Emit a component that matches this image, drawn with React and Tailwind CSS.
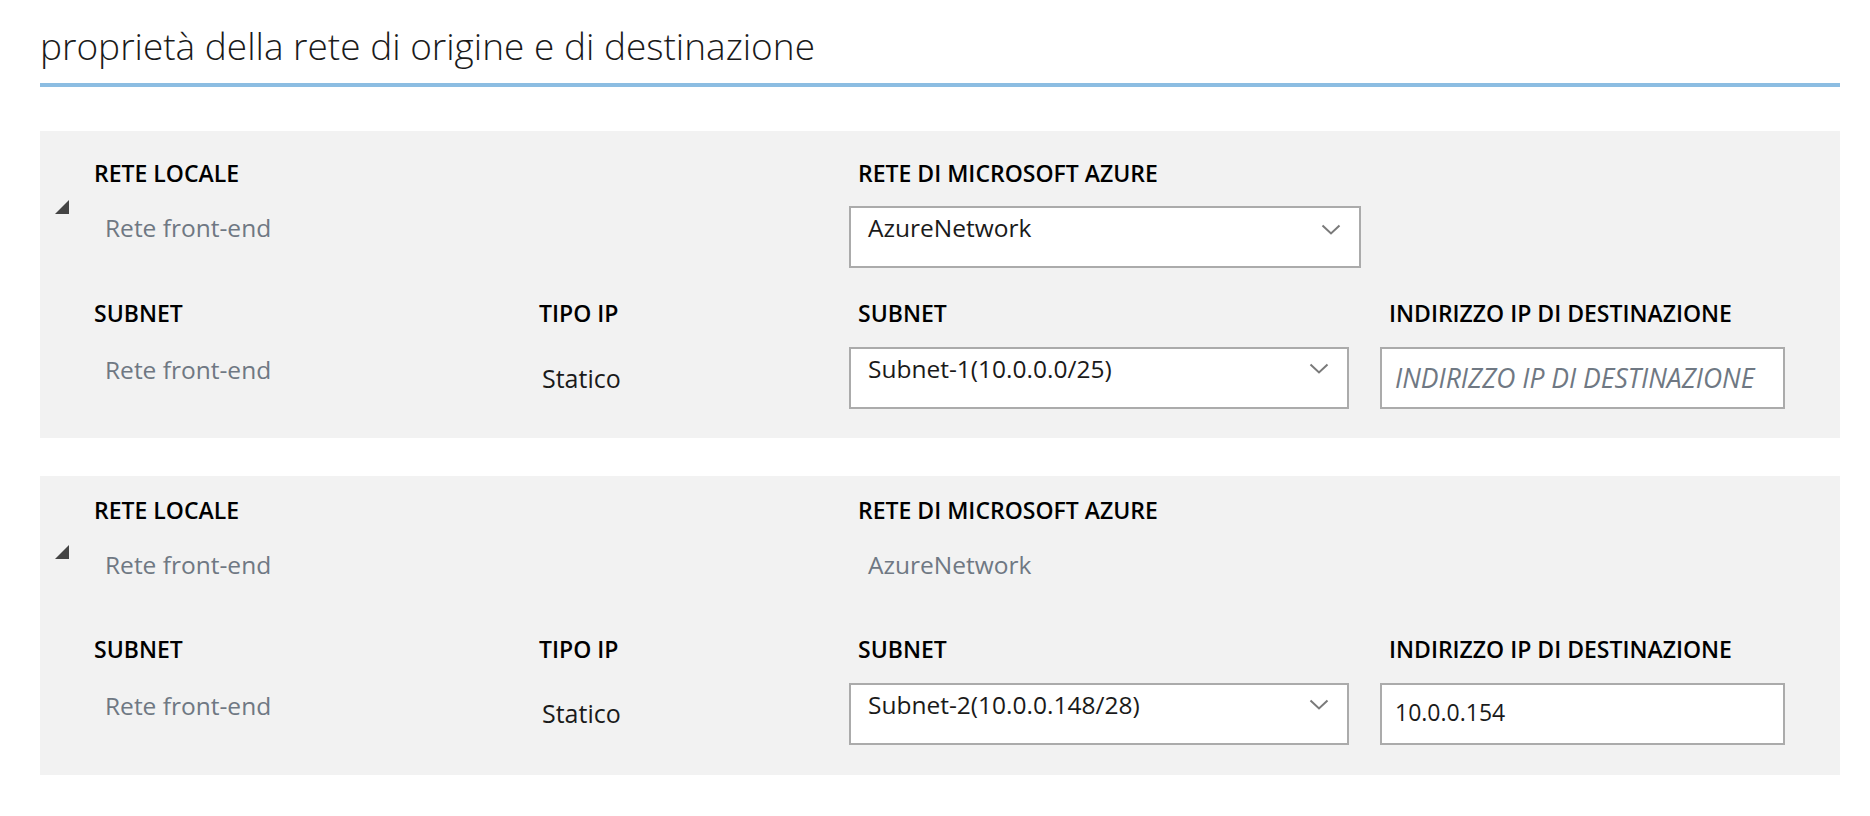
import React from "react";

const Tri = () => (
  <svg width="14" height="14" viewBox="0 0 14 14" className="block">
    <polygon points="14,0 14,14 0,14" fill="#444444" />
  </svg>
);

const Chevron = ({ top }) => (
  <svg
    width="20"
    height="11"
    viewBox="0 0 20 11"
    className={"absolute right-[18px] " + top}
  >
    <polyline points="1.5,1.5 10,9.5 18.5,1.5" fill="none" stroke="#7a7a7a" strokeWidth="2" />
  </svg>
);

const Label = ({ children, className = "" }) => (
  <div className={"text-[23px] font-semibold leading-[32px] text-black whitespace-nowrap " + className}>
    {children}
  </div>
);

const Gray = ({ children, className = "" }) => (
  <div className={"text-[24.5px] leading-[32px] text-[#6f7883] whitespace-nowrap " + className}>
    {children}
  </div>
);

const Select = ({ children, width, chevTop }) => (
  <div
    className={
      "relative h-[62px] border-2 border-[#ababab] bg-white pl-[17px] pt-[4px] text-[24.5px] leading-[32px] text-[#1a1a1a] whitespace-nowrap " +
      width
    }
  >
    {children}
    <Chevron top={chevTop} />
  </div>
);

const TextBox = ({ children, placeholder }) => (
  <div className="flex h-[62px] w-[405px] items-center border-2 border-[#ababab] bg-white pl-[13px] leading-[32px] whitespace-nowrap">
    {placeholder ? (
      <span className="text-[26.5px] italic text-[#6f7883]">{placeholder}</span>
    ) : (
      <span className="mb-[4px] text-[23px] text-[#1a1a1a]">{children}</span>
    )}
  </div>
);

export default function App() {
  return (
    <div className="min-h-[816px] bg-white pl-[40px] pr-[30px] font-['Open_Sans',sans-serif]">
      <div className="pt-[24px] text-[37px] font-light leading-[44px] text-[#1a1a1a] whitespace-nowrap">
        proprietà della rete di origine e di destinazione
      </div>
      <div className="mt-[15px] h-[4px] bg-[#8cbde2]" />

      {/* Panel 1 */}
      <div className="mt-[44px] flex bg-[#f2f2f2]">
        <div className="w-[54px] shrink-0 pl-[15px] pt-[69px]">
          <Tri />
        </div>
        <div className="grid grid-cols-[445px_310px_531px_1fr] pt-[26px] pb-[29px]">
          <Label className="mb-[17px]">RETE LOCALE</Label>
          <div />
          <Label className="mb-[17px] pl-[9px]">RETE DI MICROSOFT AZURE</Label>
          <div />

          <Gray className="pl-[11px] pt-[6px]">Rete front-end</Gray>
          <div />
          <Select width="w-[512px]" chevTop="top-[16px]">AzureNetwork</Select>
          <div />

          <Label className="mt-[29px] mb-[18px]">SUBNET</Label>
          <Label className="mt-[29px] mb-[18px]">TIPO IP</Label>
          <Label className="mt-[29px] mb-[18px] pl-[9px]">SUBNET</Label>
          <Label className="mt-[29px] mb-[18px] pl-[9px]">INDIRIZZO IP DI DESTINAZIONE</Label>

          <Gray className="pl-[11px] pt-[7px]">Rete front-end</Gray>
          <div className="pl-[3px] pt-[15px] text-[25px] leading-[32px] text-[#1a1a1a]">Statico</div>
          <Select width="w-[500px]" chevTop="top-[14px]">Subnet-1(10.0.0.0/25)</Select>
          <TextBox placeholder="INDIRIZZO IP DI DESTINAZIONE" />
        </div>
      </div>

      {/* Panel 2 */}
      <div className="mt-[38px] flex bg-[#f2f2f2]">
        <div className="w-[54px] shrink-0 pl-[15px] pt-[69px]">
          <Tri />
        </div>
        <div className="grid grid-cols-[445px_310px_531px_1fr] pt-[18px] pb-[30px]">
          <Label className="mb-[17px]">RETE LOCALE</Label>
          <div />
          <Label className="mb-[17px] pl-[9px]">RETE DI MICROSOFT AZURE</Label>
          <div />

          <Gray className="min-h-[61px] pl-[11px] pt-[6px]">Rete front-end</Gray>
          <div />
          <Gray className="pl-[19px] pt-[6px]">AzureNetwork</Gray>
          <div />

          <Label className="mt-[29px] mb-[18px]">SUBNET</Label>
          <Label className="mt-[29px] mb-[18px]">TIPO IP</Label>
          <Label className="mt-[29px] mb-[18px] pl-[9px]">SUBNET</Label>
          <Label className="mt-[29px] mb-[18px] pl-[9px]">INDIRIZZO IP DI DESTINAZIONE</Label>

          <Gray className="pl-[11px] pt-[7px]">Rete front-end</Gray>
          <div className="pl-[3px] pt-[14px] text-[25px] leading-[32px] text-[#1a1a1a]">Statico</div>
          <Select width="w-[500px]" chevTop="top-[14px]">Subnet-2(10.0.0.148/28)</Select>
          <TextBox>10.0.0.154</TextBox>
        </div>
      </div>
    </div>
  );
}
